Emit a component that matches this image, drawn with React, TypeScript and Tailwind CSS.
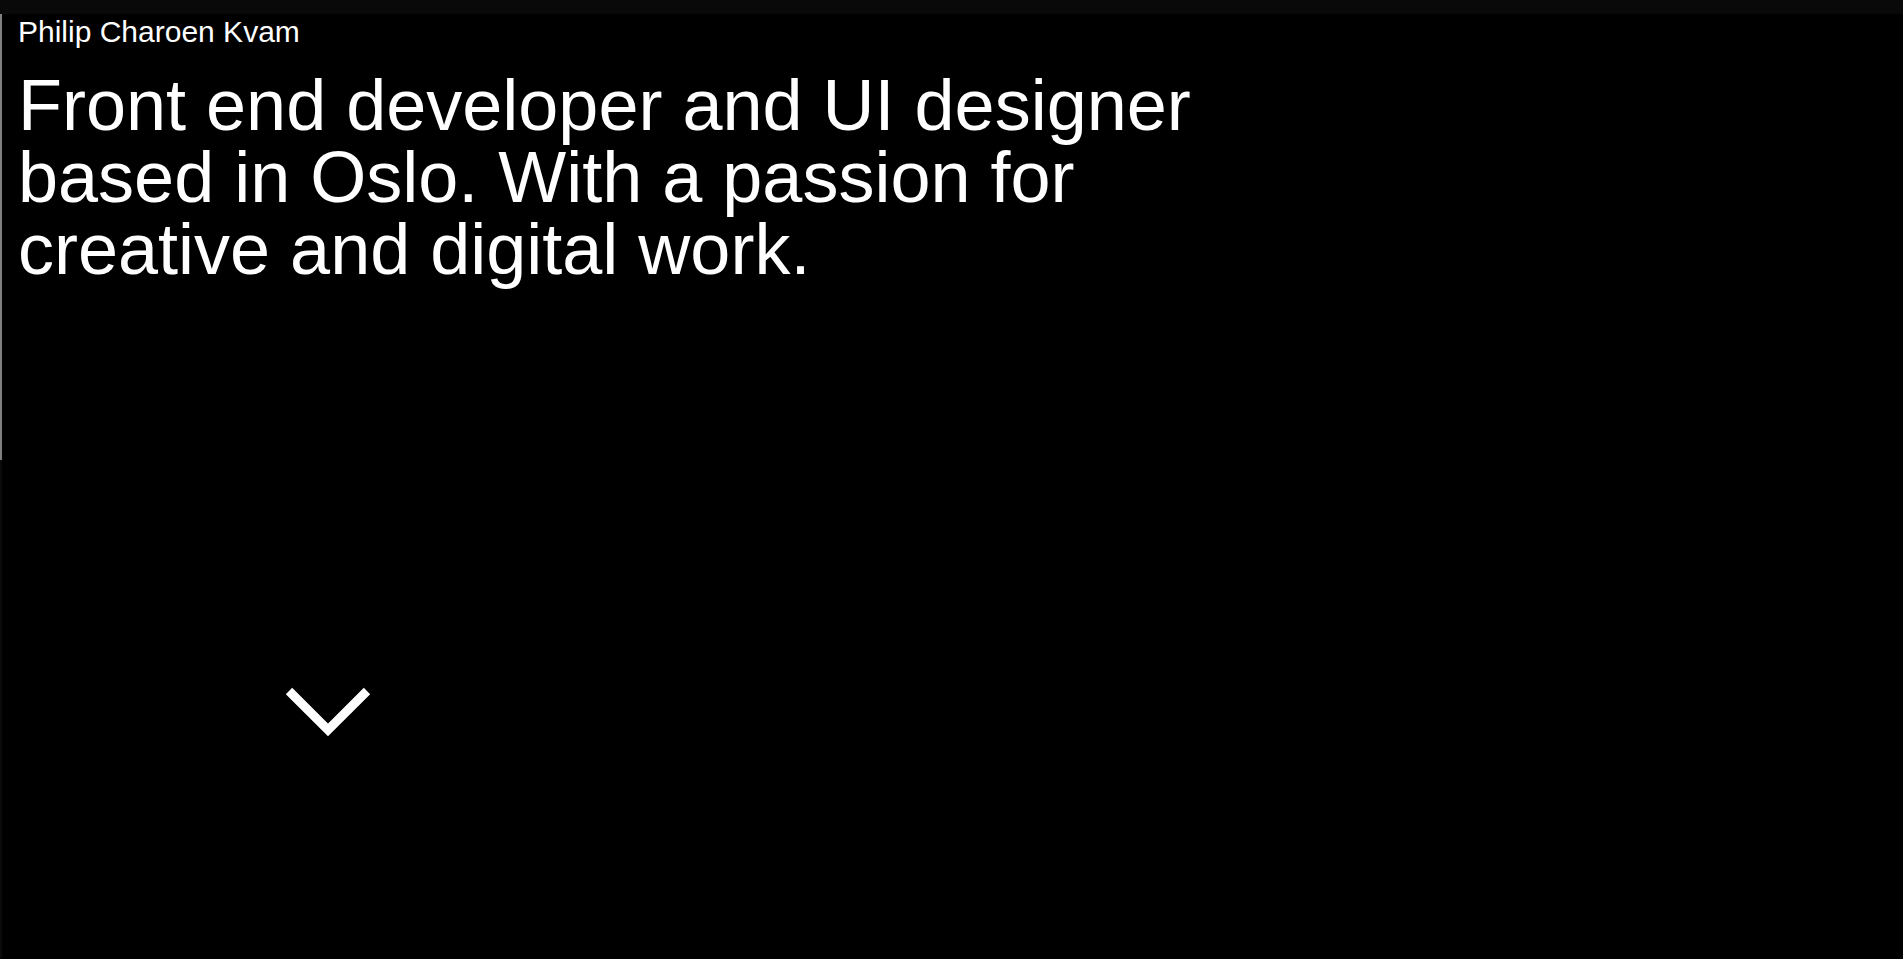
export default function App() {
  return (
    <div className="flex min-h-[959px] flex-col bg-black text-white [font-family:'Liberation_Sans',Arial,sans-serif]">
      <div className="h-[14px] bg-[#090909]" />

      <div className="flex flex-1">
        {/* left rail */}
        <div className="flex w-[2px] flex-col bg-[#0a0a0a]">
          <div className="h-[446px] bg-[#808080]" />
        </div>

        <main className="flex flex-1 flex-col pl-4 pt-[1px]">
          <p className="text-[30px] leading-[34px]">Philip Charoen Kvam</p>

          <h1 className="mt-[20px] max-w-[1260px] text-[72px] leading-[72px] font-normal">
            Front end developer and UI designer based in Oslo. With a passion
            for creative and digital work.
          </h1>

          <a
            href="#work"
            aria-label="Scroll down"
            className="mt-[398px] ml-[265px] block w-[90px]"
          >
            <svg
              width="90"
              height="58"
              viewBox="0 0 90 58"
              fill="none"
              stroke="white"
              strokeWidth="9"
              strokeLinecap="butt"
              strokeLinejoin="miter"
            >
              <polyline points="6,8 45,47 84,8" />
            </svg>
          </a>
        </main>
      </div>
    </div>
  );
}
